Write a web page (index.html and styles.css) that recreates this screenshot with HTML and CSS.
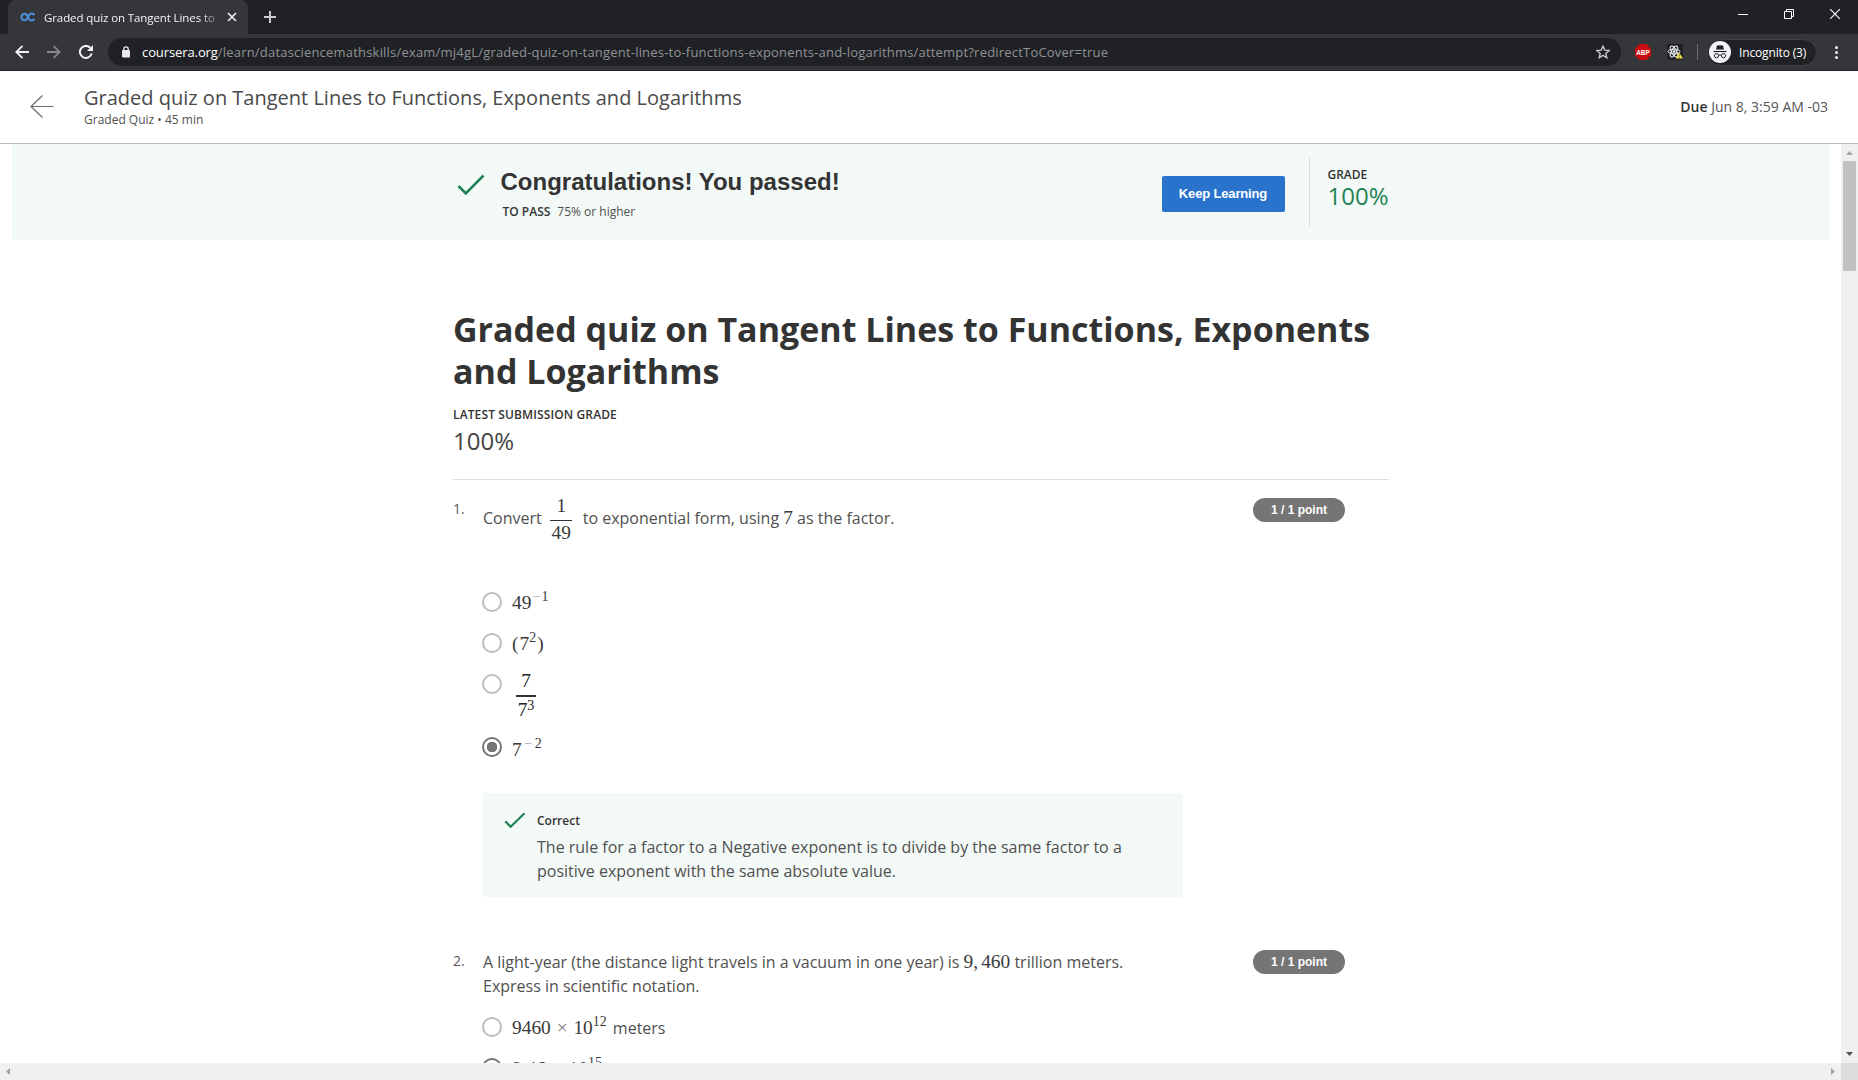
FILE: index.html
```html
<!DOCTYPE html>
<html lang="en">
<head>
<meta charset="utf-8">
<title>Graded quiz on Tangent Lines to Functions, Exponents and Logarithms</title>
<link rel="stylesheet" href="styles.css">
</head>
<body>
<div class="browser">
  <div class="tab-strip">
    <div class="tab">
      <svg class="favicon" width="16" height="10" viewBox="0 0 16 10"><path d="M14.400 3.300C13 .8 10.300 1 9 3L7 6.800C5.600 9 1.500 8.600 1.500 5S5.600 1 7 3.200L9 7C10.300 9 13 9.200 14.400 6.700" fill="none" stroke="#4a90d9" stroke-width="2.100"/></svg>
      <span class="tab-title">Graded quiz on Tangent Lines to</span>
      <svg class="tab-close" width="10" height="10" viewBox="0 0 10 10"><path d="M1 1l8 8M9 1l-8 8" stroke="#e8eaed" stroke-width="1.7"/></svg>
    </div>
    <svg class="new-tab" width="12" height="12" viewBox="0 0 12 12"><path d="M6 0v12M0 6h12" stroke="#c9cbce" stroke-width="2"/></svg>
    <div class="window-buttons">
      <svg width="10" height="10" viewBox="0 0 10 10"><path d="M0 5.500h10" stroke="#fff"/></svg>
      <svg width="10" height="10" viewBox="0 0 10 10"><path d="M.5 2.500h7v7h-7zM2.500 2.500v-2h7v7h-2" fill="none" stroke="#fff"/></svg>
      <svg width="10" height="10" viewBox="0 0 10 10"><path d="M0 0l10 10M10 0L0 10" stroke="#fff" stroke-width="1.100"/></svg>
    </div>
  </div>
  <div class="toolbar">
    <svg class="nav-back" width="14" height="14" viewBox="0 0 14 14"><path d="M14 7H1.500M7.500 .8L1.300 7l6.200 6.200" fill="none" stroke="#f1f3f4" stroke-width="1.800"/></svg>
    <svg class="nav-forward" width="14" height="14" viewBox="0 0 14 14"><path d="M0 7h12.500M6.500 .8L12.700 7l-6.200 6.200" fill="none" stroke="#86888b" stroke-width="1.800"/></svg>
    <svg class="nav-reload" width="14" height="14" viewBox="0 0 14 14"><path d="M12.700 8.500A6 6 0 1 1 11.300 2.800" fill="none" stroke="#f1f3f4" stroke-width="2"/><path d="M14 0v6H8z" fill="#f1f3f4"/></svg>
    <div class="address-bar">
      <svg class="lock" width="8" height="12" viewBox="0 0 8 12"><rect y="4" width="8" height="7.500" rx="1" fill="#e8eaed"/><path d="M1.800 4.500V3a2.200 2.200 0 0 1 4.400 0v1.500" fill="none" stroke="#e8eaed" stroke-width="1.300"/></svg>
      <span class="host">coursera.org</span><span class="path">/learn/datasciencemathskills/exam/mj4gL/graded-quiz-on-tangent-lines-to-functions-exponents-and-logarithms/attempt?redirectToCover=true</span>
      <svg class="star" width="14" height="14" viewBox="0 0 14 14"><path d="M7 1l1.750 4.100 4.450.400-3.400 2.900 1.050 4.350L7 10.400l-3.850 2.350L4.200 8.400.8 5.500l4.450-.4z" fill="none" stroke="#c4c6c9" stroke-width="1.400"/></svg>
    </div>
    <svg class="ext-abp" width="16" height="16" viewBox="0 0 16 16"><path d="M4.700 0h6.600L16 4.700v6.600L11.300 16H4.700L0 11.300V4.700z" fill="#c70d12"/><text x="8" y="10.700" text-anchor="middle" textLength="13.500" lengthAdjust="spacingAndGlyphs" class="abp-label">ABP</text></svg>
    <svg class="ext-react" width="16" height="16" viewBox="0 0 16 16"><path fill="#202124" d="M0 0h16v16H0z"/><g fill="none" stroke="#f1f3f4" stroke-width="1"><ellipse cx="7" cy="7.500" rx="6" ry="2.400"/><ellipse cx="7" cy="7.500" rx="6" ry="2.400" transform="rotate(60 7 7.500)"/><ellipse cx="7" cy="7.500" rx="6" ry="2.400" transform="rotate(120 7 7.500)"/></g><circle cx="7" cy="7.500" r="1.300" fill="#fff"/><path d="M12 8.500l4 6H9z" fill="#f6e642"/><path d="M12.300 10.500v2M12.300 13v1" stroke="#555" stroke-width=".8"/></svg>
    <span class="toolbar-divider"></span>
    <div class="profile">
      <svg width="22" height="22" viewBox="0 0 22 22"><circle cx="11" cy="11" r="11" fill="#f1f3f4"/><path d="M7 8.500L8 4.800c.2-.6.600-.8 1.200-.6l1.800.400 1.800-.4c.6-.2 1 0 1.200.6l1 3.700z" fill="#202124"/><path d="M4.500 10.500h13" stroke="#202124" stroke-width="1.200"/><g fill="none" stroke="#202124"><circle cx="7.500" cy="14.700" r="2.100"/><circle cx="14.500" cy="14.700" r="2.100"/><path d="M9.600 14.300q1.400-.7 2.800 0"/></g></svg>
      <span class="profile-name">Incognito (3)</span>
    </div>
    <svg class="menu-dots" width="3" height="13" viewBox="0 0 3 13"><g fill="#f1f3f4"><circle cx="1.500" cy="1.500" r="1.500"/><circle cx="1.500" cy="6.500" r="1.500"/><circle cx="1.500" cy="11.500" r="1.500"/></g></svg>
  </div>
</div>

<header class="page-header">
  <svg class="exit" width="24" height="24" viewBox="0 0 24 24"><path d="M23.500 11.500H1M12.500 .5L1 11.500l11.500 11" fill="none" stroke="#6a6a6a" stroke-width="1.200"/></svg>
  <div class="header-text">
    <div class="header-title">Graded quiz on Tangent Lines to Functions, Exponents and Logarithms</div>
    <div class="header-sub">Graded Quiz • 45 min</div>
  </div>
  <div class="due"><b>Due</b> Jun 8, 3:59 AM -03</div>
</header>

<div class="viewport">
  <div class="main-row">
    <main class="scroll-area">
      <section class="banner">
        <div class="banner-inner">
          <svg class="banner-check" width="28" height="22" viewBox="0 0 28 22"><path d="M1.500 12l7.300 7.300L26.500 1.500" fill="none" stroke="#1f8354" stroke-width="2.600"/></svg>
          <div class="banner-copy">
            <div class="congrats">Congratulations! You passed!</div>
            <div class="to-pass"><b>TO PASS</b><span>75% or higher</span></div>
          </div>
          <button class="keep">Keep Learning</button>
          <div class="grade"><div class="grade-label">GRADE</div><div class="grade-value">100%</div></div>
        </div>
      </section>

      <article class="quiz">
        <h1 class="quiz-title">Graded quiz on Tangent Lines to Functions, Exponents<br>and Logarithms</h1>
        <div class="latest-label">LATEST SUBMISSION GRADE</div>
        <div class="latest-value">100%</div>
        <hr class="rule">

        <section class="question first">
          <div class="number">1.</div>
          <div class="body">
            <p class="prompt with-fraction"><span>Convert</span><span class="math frac"><span>1</span><span>49</span></span><span>to exponential form, using</span> <span class="math">7</span> <span>as the factor.</span></p>
            <div class="options">
              <div class="option"><span class="radio"></span><span class="math">49<sup><i>−</i>1</sup></span></div>
              <div class="option"><span class="radio"></span><span class="math"><span class="open">(</span>7<sup>2</sup><span class="close">)</span></span></div>
              <div class="option tall"><span class="radio"></span><span class="math frac heavy"><span>7</span><span>7<sup>3</sup></span></span></div>
              <div class="option last"><span class="radio checked"></span><span class="math">7<sup><i>−</i>2</sup></span></div>
            </div>
            <div class="feedback">
              <svg class="feedback-check" width="22" height="17" viewBox="0 0 22 17"><path d="M1.200 9.300l5.500 5.500L20.500 1.200" fill="none" stroke="#1f8354" stroke-width="2.200"/></svg>
              <div>
                <div class="feedback-title">Correct</div>
                <p class="feedback-text">The rule for a factor to a Negative exponent is to divide by the same factor to a<br>positive exponent with the same absolute value.</p>
              </div>
            </div>
          </div>
          <div class="points">1 / 1 point</div>
        </section>

        <section class="question second">
          <div class="number">2.</div>
          <div class="body">
            <p class="prompt">A light-year (the distance light travels in a vacuum in one year) is <span class="math">9,<span class="thin"></span>460</span> trillion meters.<br>Express in scientific notation.</p>
            <div class="options">
              <div class="option"><span class="radio"></span><span class="math">9460 <span class="times">×</span> 10<sup>12</sup></span><span class="unit">meters</span></div>
              <div class="option"><span class="radio checked"></span><span class="math">9.46 <span class="times">×</span> 10<sup>15</sup></span></div>
            </div>
          </div>
          <div class="points">1 / 1 point</div>
        </section>
      </article>
    </main>
    <div class="v-scroll">
      <svg width="7" height="4" viewBox="0 0 7 4"><path d="M0 4l3.500-4L7 4z" fill="#a3a3a3"/></svg>
      <div class="thumb"></div>
      <svg class="v-down" width="7" height="4" viewBox="0 0 7 4"><path d="M0 0l3.500 4L7 0z" fill="#505050"/></svg>
    </div>
  </div>
  <div class="h-scroll">
    <svg width="4" height="7" viewBox="0 0 4 7"><path d="M4 0L0 3.500 4 7z" fill="#a3a3a3"/></svg>
    <svg class="h-right" width="4" height="7" viewBox="0 0 4 7"><path d="M0 0l4 3.500L0 7z" fill="#a3a3a3"/></svg>
    <div class="corner"></div>
  </div>
</div>
</body>
</html>
```
FILE: styles.css
```css
* { box-sizing: border-box; }
body { margin: 0; width: 1858px; height: 1080px; overflow: hidden; display: flex; flex-direction: column; background: #fff; color: #333; font-family: "Open Sans", "Noto Sans", sans-serif; }
svg { display: block; flex: none; }
p, h1, hr { margin: 0; }
sup { line-height: 0; }

.browser { height: 71px; flex: none; background: #35363a; border-bottom: 1px solid #242427; font-size: 12px; }
.tab-strip { height: 34px; background: #202124; display: flex; align-items: center; }
.tab { width: 240px; height: 34px; margin-left: 8px; background: #35363a; border-radius: 8px 8px 0 0; display: flex; align-items: center; padding-left: 12px; }
.tab-title { width: 175px; margin-left: 8px; color: #f1f3f4; font-size: 11.500px; letter-spacing: -.1px; white-space: nowrap; mask-image: linear-gradient(90deg, #000 155px, rgba(0,0,0,.3) 172px); }
.tab-close { margin-left: 8px; }
.new-tab { margin-left: 16px; }
.window-buttons { margin-left: auto; margin-right: 18px; margin-top: -6px; display: flex; gap: 36px; }
.toolbar { height: 36px; display: flex; align-items: center; padding-left: 15px; }
.nav-forward { margin-left: 18px; }
.nav-reload { margin-left: 18px; }
.address-bar { width: 1513px; height: 28px; margin-left: 15px; padding: 0 11px 0 14px; border-radius: 14px; background: #202124; display: flex; align-items: center; white-space: nowrap; font-size: 13px; }
.host { margin-left: 12px; color: #fff; letter-spacing: -.1px; }
.path { color: #8f9398; letter-spacing: .2px; }
.star { margin-left: auto; }
.ext-abp { margin-left: 14px; }
.abp-label { font: bold 7px "Liberation Sans", sans-serif; fill: #fff; }
.ext-react { margin-left: 16px; }
.toolbar-divider { width: 1px; height: 16px; margin-left: 14px; background: #6b6d70; }
.profile { width: 110px; height: 27px; margin-left: 9px; padding-left: 1px; border: 1px solid #404145; border-radius: 14px; background: #202124; display: flex; align-items: center; color: #fff; }
.profile-name { margin-left: 8px; white-space: nowrap; letter-spacing: -.15px; }
.menu-dots { margin-left: 18px; }

.page-header { height: 73px; flex: none; border-bottom: 1px solid #bbb; display: flex; align-items: center; padding: 0 30px; }
.header-text { margin: -2px 0 0 30px; }
.header-title { font-size: 20px; line-height: 26px; white-space: nowrap; color: #4a4a4a; }
.header-sub { font-size: 12px; line-height: 17px; color: #505050; }
.due { margin: -2px 0 0 auto; font-size: 14px; color: #555; }
.due b { font-weight: 600; color: #333; }

.viewport { height: 936px; display: flex; flex-direction: column; }
.main-row { height: 919px; display: flex; }
.scroll-area { width: 1841px; height: 919px; overflow: hidden; }
.banner { height: 96px; margin: 0 12px; background: #f3f9f7; display: flex; justify-content: center; }
.banner-inner { width: 936px; display: flex; padding-top: 14px; }
.banner-check { margin: 16px 0 0 4px; }
.banner-copy { margin-left: 16px; width: 661px; flex: none; }
.congrats { font: bold 24px/28px "Liberation Sans", sans-serif; padding-top: 10px; }
.to-pass { display: flex; gap: 7px; padding-left: 2px; margin-top: 7px; font-size: 12px; line-height: 18px; color: #505050; }
.to-pass b { font-weight: 600; color: #333; }
.keep { width: 123px; height: 36px; flex: none; margin-top: 18px; padding: 0 0 1px; border: 0; border-radius: 2px; background: #2a73cc; color: #fff; font: bold 13px "Liberation Sans", sans-serif; letter-spacing: -.15px; }
.grade { height: 68px; margin-left: 24px; padding-left: 18px; border-left: 1px solid #d5dbd9; }
.grade-label { font-size: 12px; line-height: 16px; font-weight: 600; padding-top: 9px; }
.grade-value { font-size: 24px; line-height: 28px; margin-top: -1px; color: #1f8354; }

.quiz { width: 936px; margin: 68px 0 0 453px; }
.quiz-title { font-size: 34px; line-height: 42px; font-weight: 700; white-space: nowrap; }
.latest-label { margin-top: 14px; font-size: 12px; line-height: 18px; font-weight: 600; letter-spacing: .12px; }
.latest-value { margin-top: 1px; font-size: 24px; line-height: 32px; color: #444; }
.rule { height: 1px; border: 0; background: #dedede; margin-top: 22px; }
.question { display: flex; align-items: flex-start; }
.number { width: 30px; font-size: 14px; line-height: 20px; padding-top: 19px; color: #5a5a5a; }
.body { width: 700px; }
.points { width: 92px; height: 24px; margin: 18px 0 0 70px; border-radius: 12px; background: #757575; color: #fff; text-align: center; font: bold 12px/24px "Liberation Sans", sans-serif; }
.prompt { font-size: 16px; line-height: 24px; white-space: nowrap; color: #505050; }
.math { font-family: "Liberation Serif", serif; font-size: 19.400px; line-height: 24px; color: #3a3a3a; }
.math sup { font-size: 14px; vertical-align: 8px; }
.math i { display: inline-block; width: 10px; text-align: center; font-style: normal; color: #aaa; }
.open { margin-right: 1px; }
.close { margin-left: 1px; }
.times { margin: 0 1px; color: #777; }
.frac { display: inline-flex; flex-direction: column; align-items: center; vertical-align: middle; }
.frac > span:first-child { border-bottom: 1px solid #333; width: 100%; text-align: center; padding-bottom: 2px; }
.with-fraction { padding-top: 14px; height: 112px; }
.with-fraction .frac { width: 22px; margin: 0 10.500px 0 8.500px; }
.option { display: flex; height: 41px; align-items: flex-start; }
.option .math { margin: -1.500px 0 0 10px; }
.unit { margin: -1px 0 0 6px; line-height: 24px; color: #505050; }
.radio { width: 20px; height: 20px; margin-left: -1px; border: 2px solid #bdbdbd; border-radius: 50%; flex: none; }
.checked { border-color: #757575; background: radial-gradient(circle, #757575 5px, transparent 5.500px); }
.tall { height: 63px; }
.option .heavy { width: 20px; margin: -5px 0 0 14px; color: #222; }
.frac.heavy > span:first-child { border-bottom-width: 2px; }
.frac.heavy > span:last-child { padding-top: 1px; }
.heavy sup { vertical-align: 6px; }
.last { height: 56px; }
.last .math { margin-top: 1px; }
.last .math i { width: 13px; }
.feedback { height: 104px; background: #f3f9f7; display: flex; padding: 18px 0 0 21px; }
.feedback-check { margin-top: 1px; }
.feedback > div { margin-left: 11px; }
.feedback-title { font-size: 12px; line-height: 20px; font-weight: 600; }
.feedback-text { margin-top: 4px; font-size: 16px; line-height: 24px; white-space: nowrap; color: #505050; }
.second { margin-top: 35px; }
.second .prompt { padding-top: 18px; height: 85px; }
.thin { display: inline-block; width: 3px; }

.v-scroll { width: 17px; background: #f0f0f0; display: flex; flex-direction: column; align-items: center; padding: 7px 0; }
.thumb { width: 13px; height: 110px; margin-top: 6px; background: #c1c1c1; }
.v-down { margin-top: auto; }
.h-scroll { height: 17px; background: #f0f0f0; display: flex; align-items: center; padding-left: 6px; }
.h-right { margin-left: auto; margin-right: 6px; }
.corner { width: 17px; height: 17px; background: #dcdcdc; }
```
